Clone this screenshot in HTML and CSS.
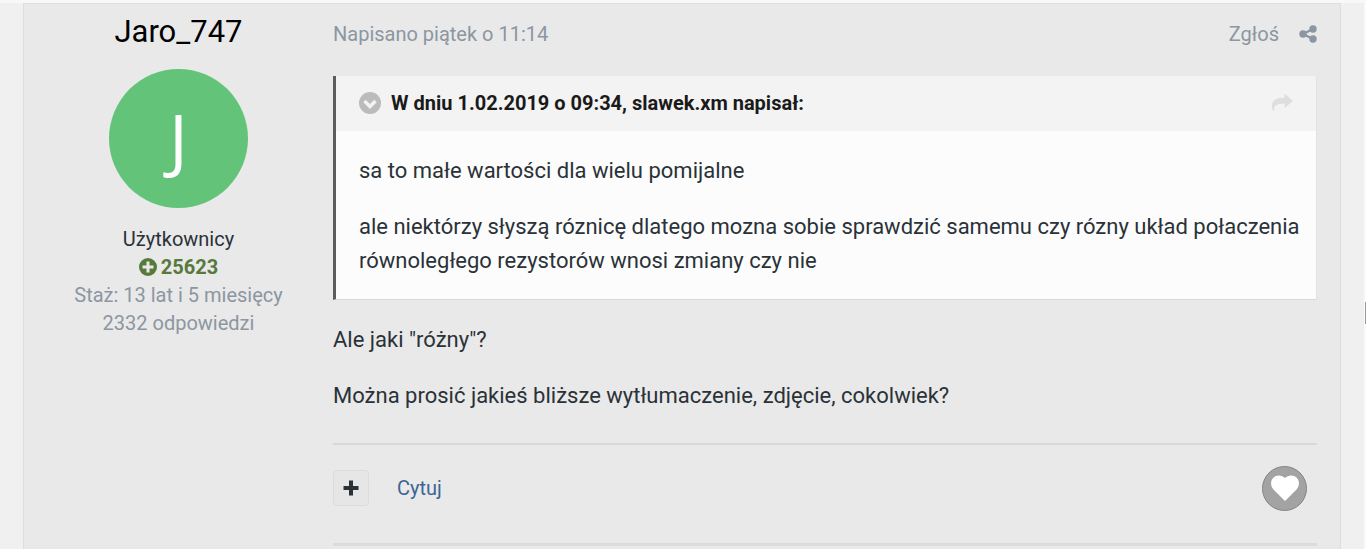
FILE: index.html
```html
<!DOCTYPE html>
<html lang="pl">
<head>
<meta charset="utf-8">
<meta name="viewport" content="width=device-width, initial-scale=1">
<title>Forum</title>
<link rel="stylesheet" href="styles.css">
</head>
<body>
<div class="page">
<article class="post">
  <aside class="author">
    <h3 class="author-name">Jaro_747</h3>
    <div class="avatar">J</div>
    <ul class="author-info">
      <li>Użytkownicy</li>
      <li class="reputation">
        <svg class="rep-icon" viewBox="0 0 18 18" aria-hidden="true"><circle cx="9" cy="9" r="9" fill="currentColor"/><path d="M9 3.500v11M3.500 9h11" stroke="#e9e9e9" stroke-width="3"/></svg>
        25623
      </li>
      <li class="muted">Staż: 13 lat i 5 miesięcy</li>
      <li class="muted">2332 odpowiedzi</li>
    </ul>
  </aside>
  <div class="content">
    <header class="meta">
      <a class="meta-link" href="#">Napisano piątek o 11:14</a>
      <div class="meta-tools">
        <a class="meta-link" href="#">Zgłoś</a>
        <a class="meta-link share" href="#" aria-label="Udostępnij">
          <svg class="share-icon" viewBox="0 0 18 18" aria-hidden="true"><path d="M14 4 4 9l10 5" fill="none" stroke="currentColor" stroke-width="2.500"/><circle cx="14" cy="4" r="3.700" fill="currentColor"/><circle cx="4" cy="9" r="3.700" fill="currentColor"/><circle cx="14" cy="14" r="3.700" fill="currentColor"/></svg>
        </a>
      </div>
    </header>
    <blockquote class="quote">
      <div class="quote-head">
        <button class="quote-toggle" type="button" aria-label="Zwiń cytat">
          <svg class="toggle-icon" viewBox="0 0 22 22" aria-hidden="true"><circle cx="11" cy="11" r="11" fill="#bbb"/><path d="m5.500 9 5.500 5.500L16.500 9" fill="none" stroke="#f3f3f3" stroke-width="3.500"/></svg>
        </button>
        <span class="quote-title">W dniu 1.02.2019 o 09:34, slawek.xm napisał:</span>
        <a class="quote-jump" href="#" aria-label="Przejdź do posta">
          <svg class="jump-icon" viewBox="0 0 22 18" aria-hidden="true"><path d="M21.500 6.700 14.500 0.300c-.5-.5-1-.2-1 .5v3C6 3.800 1 5.500 1 12c0 2 .6 3.600 1.500 5 .3.500.9.300.7-.3C2.200 12 5 9.800 13.500 9.800v3c0 .7.500 1 1 .5l7-6c.3-.2.300-.4 0-.6z" fill="currentColor"/></svg>
        </a>
      </div>
      <div class="quote-body">
        <p>sa to małe wartości dla wielu pomijalne</p>
        <p>ale niektórzy słyszą róznicę dlatego mozna sobie sprawdzić samemu czy rózny układ połaczenia równoległego rezystorów wnosi zmiany czy nie</p>
      </div>
    </blockquote>
    <div class="message">
      <p>Ale jaki "różny"?</p>
      <p>Można prosić jakieś bliższe wytłumaczenie, zdjęcie, cokolwiek?</p>
    </div>
    <footer class="controls">
      <button class="multiquote" type="button" aria-label="Multicytat">
        <svg class="plus-icon" viewBox="0 0 16 16" aria-hidden="true"><path d="M8 2.500v11M2.500 8h11" stroke="currentColor" stroke-width="4" stroke-linecap="square"/></svg>
      </button>
      <a class="reply" href="#">Cytuj</a>
      <button class="like" type="button" aria-label="Lubię to">
        <svg class="heart-icon" viewBox="0 0 28 26" aria-hidden="true"><path d="M14 26 2.500 14.500C-.8 11 -.6 5.500 2.300 2.700 5.600-.5 10.800-.2 14 3c3.200-3.200 8.400-3.500 11.700-.3 2.900 2.800 3.100 8.300-.2 11.800z" fill="#fff"/></svg>
      </button>
    </footer>
  </div>
</article>
</div>
<div class="scroll-thumb"></div>
</body>
</html>
```
FILE: styles.css
```css
* {
  box-sizing: border-box;
}

body {
  margin: 0;
  background: #f0f0f0;
  color: #2a3238;
  font-family: Roboto, "Liberation Sans", sans-serif;
  font-size: 20px;
  line-height: 28px;
  overflow: hidden;
}

h3, p, ul, blockquote {
  margin: 0;
  padding: 0;
}

a {
  color: inherit;
  text-decoration: none;
}

button {
  padding: 0;
  border: 0;
  background: none;
  color: inherit;
}

svg {
  display: block;
}

.page {
  min-height: 100vh;
  display: flex;
  padding: 0 23px;
  border-top: 3px solid #f8f8f8;
  border-right: 2px solid #fafafa;
}

.post {
  flex: 1;
  display: grid;
  grid-template-columns: 309px 1fr;
  padding-right: 23px;
  background: #e9e9e9;
  border: 1px solid #dedede;
  border-bottom: 0;
}

.author {
  display: flex;
  flex-direction: column;
  align-items: center;
  padding-top: 8px;
}

.author-name {
  color: #000;
  font-size: 31px;
  font-weight: 400;
  line-height: 40px;
}

.avatar {
  width: 139px;
  height: 139px;
  margin: 17px 0;
  border-radius: 50%;
  background: #63c479;
  color: #fff;
  font-family: "Open Sans", sans-serif;
  font-size: 70px;
  line-height: 139px;
  text-align: center;
}

.author-info {
  list-style: none;
  text-align: center;
}

.reputation {
  display: flex;
  justify-content: center;
  align-items: center;
  gap: 4px;
  color: #567a3b;
  font-weight: 700;
}

.rep-icon {
  width: 18px;
  height: 18px;
}

.muted,
.meta-link {
  color: #8c96a1;
}

.meta {
  display: flex;
  justify-content: space-between;
  align-items: center;
  padding: 16px 0 28px;
}

.meta-tools {
  display: flex;
  align-items: center;
  gap: 20px;
}

.share-icon {
  width: 18px;
  height: 18px;
}

.quote {
  border-left: 3px solid #5c5c5c;
  border-right: 1px solid #e2e2e2;
  border-bottom: 1px solid #d9d9d9;
  background: #fcfcfc;
}

.quote-head {
  display: flex;
  align-items: center;
  gap: 10px;
  height: 55px;
  padding: 0 23px 2px;
  background: #f3f3f3;
}

.toggle-icon {
  width: 22px;
  height: 22px;
}

.quote-title {
  flex: 1;
  color: #1a1a1a;
  font-weight: 700;
}

.quote-jump {
  color: #dedede;
}

.jump-icon {
  width: 22px;
  height: 18px;
}

.quote-body,
.message {
  display: grid;
  gap: 22px;
  font-size: 22px;
  line-height: 34px;
}

.quote-body {
  padding: 23px 12px 21px 23px;
}

.message {
  padding: 23px 0 30px;
}

.controls {
  display: flex;
  align-items: center;
  height: 103px;
  padding-bottom: 12px;
  border-top: 2px solid #d9d9d9;
  border-bottom: 3px solid #dcdcdc;
}

.multiquote {
  display: grid;
  place-items: center;
  width: 36px;
  height: 36px;
  margin-right: 28px;
  border: 1px solid #dcdcdc;
  border-radius: 4px;
  background: #e6e6e6;
}

.plus-icon {
  width: 16px;
  height: 16px;
}

.reply {
  color: #3d6594;
}

.like {
  display: grid;
  place-items: center;
  width: 45px;
  height: 45px;
  margin: 0 10px 0 auto;
  border: 1px solid #858585;
  border-radius: 50%;
  background: #a3a3a3;
}

.heart-icon {
  width: 28px;
  height: 26px;
}

.scroll-thumb {
  position: fixed;
  right: 0;
  top: 55%;
  width: 1px;
  height: 22px;
  background: #999;
}
```
